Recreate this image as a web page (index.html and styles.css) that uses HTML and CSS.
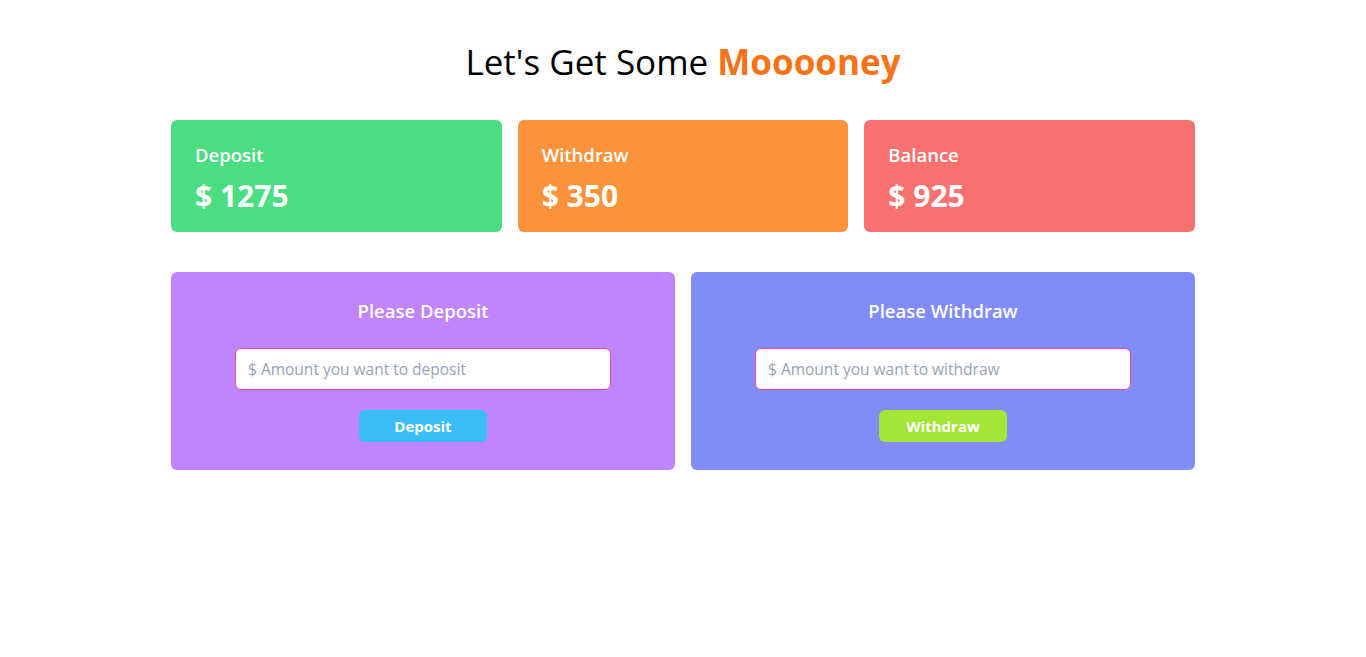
FILE: index.html
```html
<!DOCTYPE html>
<html>
<head>
<meta charset="utf-8">
<link rel="stylesheet" href="styles.css">
</head>
<body>
<main class="wrap">
  <h1 class="title">Let's Get Some <span class="accent">Mooooney</span></h1>
  <section class="stats">
    <div class="stat green"><div class="stat-label">Deposit</div><div class="stat-value">$ 1275</div></div>
    <div class="stat orange"><div class="stat-label">Withdraw</div><div class="stat-value">$ 350</div></div>
    <div class="stat red"><div class="stat-label">Balance</div><div class="stat-value">$ 925</div></div>
  </section>
  <section class="forms">
    <div class="panel purple">
      <h3 class="panel-title">Please Deposit</h3>
      <input class="amount" type="text" placeholder="$ Amount you want to deposit">
      <button class="btn sky">Deposit</button>
    </div>
    <div class="panel indigo">
      <h3 class="panel-title">Please Withdraw</h3>
      <input class="amount" type="text" placeholder="$ Amount you want to withdraw">
      <button class="btn lime">Withdraw</button>
    </div>
  </section>
</main>
</body>
</html>
```
FILE: styles.css
```css
* { box-sizing: border-box; }
body {
  margin: 0;
  font-family: "Open Sans", "Noto Sans", sans-serif;
  background: #fff;
}
.wrap {
  width: 1024px;
  margin: 0 auto;
  padding-top: 42px;
}
.title {
  margin: 0;
  text-align: center;
  font-size: 35px;
  line-height: 40px;
  font-weight: 500;
  color: #000;
}
.accent { color: #f97316; font-weight: 700; }
.stats {
  margin-top: 38px;
  display: grid;
  grid-template-columns: repeat(3, 1fr);
  gap: 16px;
}
.stat {
  height: 112px;
  border-radius: 6px;
  padding: 22px 24px;
  color: #fff;
}
.stat-label { font-size: 18.5px; line-height: 26px; font-weight: 600; }
.stat-value { font-size: 30px; line-height: 40px; font-weight: 700; margin-top: 8px; }
.green { background: #4ade80; }
.orange { background: #fb923c; }
.red { background: #f87171; }
.forms {
  margin-top: 40px;
  display: grid;
  grid-template-columns: 1fr 1fr;
  gap: 16px;
}
.panel {
  height: 198px;
  border-radius: 6px;
  padding-top: 26px;
  display: flex;
  flex-direction: column;
  align-items: center;
}
.purple { background: #c084fc; }
.indigo { background: #818cf8; }
.panel-title {
  margin: 0;
  color: #fff;
  font-size: 18.5px;
  line-height: 26px;
  font-weight: 600;
}
.amount {
  margin-top: 24px;
  width: 376px;
  height: 42px;
  border: 1px solid #ec4899;
  border-radius: 6px;
  padding: 0 12px;
  font-family: inherit;
  font-size: 15.5px;
  background: #fff;
  outline: none;
}
.amount::placeholder { color: #94a3b8; }
.btn {
  margin-top: 20px;
  width: 128px;
  height: 32px;
  border: none;
  border-radius: 6px;
  color: #fff;
  font-family: inherit;
  font-size: 15px;
  font-weight: 700;
}
.sky { background: #38bdf8; }
.lime { background: #a3e635; }
```
